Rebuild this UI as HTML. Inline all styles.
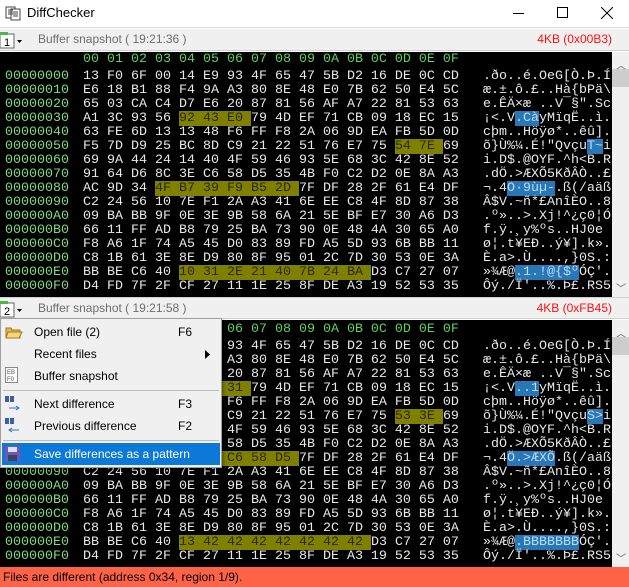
<!DOCTYPE html>
<html><head><meta charset="utf-8">
<style>
*{margin:0;padding:0;box-sizing:border-box}
body{width:629px;height:587px;overflow:hidden;background:#fff;font-family:"Liberation Sans",sans-serif;position:relative}
.abs{position:absolute}
.title{left:0;top:0;width:629px;height:28px;background:#fff;border-bottom:1px solid #d8d8d8}
.tb{left:0;width:629px;height:22px;background:#f0f0f0;border-bottom:1px solid #d0d0d0}
.tb .t{position:absolute;left:38px;top:3px;font-size:12px;color:#6d6d6d}
.tb .r{position:absolute;right:17px;top:3px;font-size:12px;color:#ff1010}
.pane{left:0;width:612px;background:#000}
.sb{left:612px;width:17px;background:#f0f0f0}
pre{position:absolute;font-family:"Liberation Mono",monospace;font-size:13.33px;line-height:14px;color:#e8e8e8;white-space:pre}
.g{color:#5fd35f}
.o{color:#7fdc7f}
.h{background:#808000;color:#2a2a00}
.b{background:#2878b8;color:#bcdcf4}
.menu{left:0;top:318px;width:222px;height:150px;background:#f0f0f0;border:1px solid #a0a0a0;box-shadow:2px 2px 3px rgba(0,0,0,.3)}
.mi{position:absolute;left:33px;font-size:12px;color:#000}
.sc{position:absolute;left:177px;font-size:12px;color:#000}
.sep{position:absolute;left:2px;width:216px;height:1px;background:#bdbdbd}
.status{left:0;top:567px;width:629px;height:20px;background:#fe6347;font-size:12px;color:#000;padding:3px 0 0 3px}
</style></head><body>
<div class="abs title">
 <svg class="abs" style="left:5px;top:5px" width="16" height="16"><rect x="1" y="2" width="9" height="11" fill="#fff" stroke="#444"/><rect x="6" y="4" width="9" height="11" fill="#fff" stroke="#444"/><path d="M3 5h5M3 7h5M3 9h5M8 7h5M8 9h5M8 11h5" stroke="#444"/></svg>
 <div class="abs" style="left:27px;top:5px;font-size:13px;color:#000">DiffChecker</div>
 <div class="abs" style="left:513px;top:13px;width:11px;height:1px;background:#000"></div>
 <div class="abs" style="left:557px;top:7px;width:11px;height:11px;border:1px solid #000"></div>
 <svg class="abs" style="left:601px;top:7px" width="12" height="12"><path d="M0 0L12 12M12 0L0 12" stroke="#000"/></svg>
</div>

<div class="abs tb" style="top:29px">
 <svg class="abs" style="left:0;top:2px" width="24" height="18"><rect x="0" y="3" width="14" height="14" fill="#fff" stroke="#666"/><rect x="0" y="1" width="8" height="3" fill="#4cb848"/><text x="4" y="15" font-size="11" font-family="Liberation Sans">1</text><path d="M17 9h5l-2.5 3z" fill="#000"/></svg>
 <div class="t">Buffer snapshot ( 19:21:36 )</div>
 <div class="r">4KB (0x00B3)</div>
</div>

<div class="abs pane" style="top:52px;height:245px"></div>
<div class="abs sb" style="top:52px;height:245px"><div class="abs" style="left:4px;top:5px;font-size:10px;color:#555">︿</div><div class="abs" style="left:0;top:17px;width:17px;height:18px;background:#cdcdcd"></div><div class="abs" style="left:4px;top:228px;font-size:10px;color:#555">﹀</div></div>
<pre class="g" style="left:83px;top:53px">00 01 02 03 04 05 06 07 08 09 0A 0B 0C 0D 0E 0F</pre>
<pre class="o" style="left:5px;top:70px">00000000
00000010
00000020
00000030
00000040
00000050
00000060
00000070
00000080
00000090
000000A0
000000B0
000000C0
000000D0
000000E0
000000F0</pre>
<pre style="left:83px;top:70px">13 F0 6F 00 14 E9 93 4F 65 47 5B D2 16 DE 0C CD
E6 18 B1 88 F4 9A A3 80 8E 48 E0 7B 62 50 E4 5C
65 03 CA C4 D7 E6 20 87 81 56 AF A7 22 81 53 63
A1 3C 93 56 <span class="h">92 43 E0 </span>79 4D EF 71 CB 09 18 EC 15
63 FE 6D 13 13 48 F6 FF F8 2A 06 9D EA FB 5D 0D
F5 7D D9 25 BC 8D C9 21 22 51 76 E7 75 <span class="h">54 7E </span>69
69 9A 44 24 14 40 4F 59 46 93 5E 68 3C 42 8E 52
91 64 D6 8C 3E C6 58 D5 35 4B F0 C2 D2 0E 8A A3
AC 9D 34 <span class="h">4F B7 39 F9 B5 2D </span>7F DF 28 2F 61 E4 DF
C2 24 56 10 7E F1 2A A3 41 6E EE C8 4F 8D 87 38
09 BA BB 9F 0E 3E 9B 58 6A 21 5E BF E7 30 A6 D3
66 11 FF AD B8 79 25 BA 73 90 0E 48 4A 30 65 A0
F8 A6 1F 74 A5 45 D0 83 89 FD A5 5D 93 6B BB 11
C8 1B 61 3E 8E D9 80 8F 95 01 2C 7D 30 53 0E 3A
BB BE C6 40 <span class="h">10 31 2E 21 40 7B 24 BA </span>D3 C7 27 07
D4 FD 7F 2F CF 27 11 1E 25 8F DE A3 19 52 53 35</pre>
<pre style="left:483px;top:70px">.ðo..é.OeG[Ò.Þ.Í
æ.±.ô.£..Hà{bPä\
e.ÊÄ×æ ..V¯§".Sc
¡&lt;.V<span class="b">.Cà</span>yMïqË..ì.
cþm..Höÿø*..êû].
õ}Ù%¼.É!"Qvçu<span class="b">T~</span>i
i.D$.@OYF.^h&lt;B.R
.dÖ.&gt;ÆXÕ5KðÂÒ..£
¬.4<span class="b">O·9ùµ-</span>.ß(/aäß
Â$V.~ñ*£AnîÈO..8
.º»..&gt;.Xj!^¿ç0¦Ó
f.ÿ.¸y%ºs..HJ0e 
ø¦.t¥EÐ..ý¥].k».
È.a&gt;.Ù....,}0S.:
»¾Æ@<span class="b">.1.!@{$º</span>ÓÇ'.
Ôý./Ï'..%.Þ£.RS5</pre>

<div class="abs tb" style="top:297px;border-top:1px solid #d0d0d0">
 <svg class="abs" style="left:0;top:2px" width="24" height="18"><rect x="0" y="3" width="14" height="14" fill="#fff" stroke="#666"/><rect x="0" y="1" width="8" height="3" fill="#4cb848"/><text x="4" y="15" font-size="11" font-family="Liberation Sans">2</text><path d="M17 9h5l-2.5 3z" fill="#000"/></svg>
 <div class="t">Buffer snapshot ( 19:21:58 )</div>
 <div class="r">4KB (0xFB45)</div>
</div>

<div class="abs pane" style="top:320px;height:247px"></div>
<div class="abs sb" style="top:320px;height:247px"><div class="abs" style="left:4px;top:5px;font-size:10px;color:#555">︿</div><div class="abs" style="left:0;top:17px;width:17px;height:18px;background:#cdcdcd"></div><div class="abs" style="left:4px;top:230px;font-size:10px;color:#555">﹀</div></div>
<pre class="g" style="left:83px;top:323px">00 01 02 03 04 05 06 07 08 09 0A 0B 0C 0D 0E 0F</pre>
<pre class="o" style="left:5px;top:340px">00000000
00000010
00000020
00000030
00000040
00000050
00000060
00000070
00000080
00000090
000000A0
000000B0
000000C0
000000D0
000000E0
000000F0</pre>
<pre style="left:83px;top:340px">13 F0 6F 00 14 E9 93 4F 65 47 5B D2 16 DE 0C CD
E6 18 B1 88 F4 9A A3 80 8E 48 E0 7B 62 50 E4 5C
65 03 CA C4 D7 E6 20 87 81 56 AF A7 22 81 53 63
A1 3C 93 56 <span class="h">8F 81 31 </span>79 4D EF 71 CB 09 18 EC 15
63 FE 6D 13 13 48 F6 FF F8 2A 06 9D EA FB 5D 0D
F5 7D D9 25 BC 8D C9 21 22 51 76 E7 75 <span class="h">53 3E </span>69
69 9A 44 24 14 40 4F 59 46 93 5E 68 3C 42 8E 52
91 64 D6 8C 3E C6 58 D5 35 4B F0 C2 D2 0E 8A A3
AC 9D 34 <span class="h">D6 8C 3E C6 58 D5 </span>7F DF 28 2F 61 E4 DF
C2 24 56 10 7E F1 2A A3 41 6E EE C8 4F 8D 87 38
09 BA BB 9F 0E 3E 9B 58 6A 21 5E BF E7 30 A6 D3
66 11 FF AD B8 79 25 BA 73 90 0E 48 4A 30 65 A0
F8 A6 1F 74 A5 45 D0 83 89 FD A5 5D 93 6B BB 11
C8 1B 61 3E 8E D9 80 8F 95 01 2C 7D 30 53 0E 3A
BB BE C6 40 <span class="h">13 42 42 42 42 42 42 42 </span>D3 C7 27 07
D4 FD 7F 2F CF 27 11 1E 25 8F DE A3 19 52 53 35</pre>
<pre style="left:483px;top:340px">.ðo..é.OeG[Ò.Þ.Í
æ.±.ô.£..Hà{bPä\
e.ÊÄ×æ ..V¯§".Sc
¡&lt;.V<span class="b">..1</span>yMïqË..ì.
cþm..Höÿø*..êû].
õ}Ù%¼.É!"Qvçu<span class="b">S&gt;</span>i
i.D$.@OYF.^h&lt;B.R
.dÖ.&gt;ÆXÕ5KðÂÒ..£
¬.4<span class="b">Ö.&gt;ÆXÕ</span>.ß(/aäß
Â$V.~ñ*£AnîÈO..8
.º»..&gt;.Xj!^¿ç0¦Ó
f.ÿ.¸y%ºs..HJ0e 
ø¦.t¥EÐ..ý¥].k».
È.a&gt;.Ù....,}0S.:
»¾Æ@<span class="b">.BBBBBBB</span>ÓÇ'.
Ôý./Ï'..%.Þ£.RS5</pre>

<div class="abs menu">
 <svg class="abs" style="left:4px;top:5px" width="18" height="16"><path d="M1 4h5l1 2h8v8H1z" fill="#e8b840" stroke="#a07820"/><path d="M3 8h14l-3 6H1z" fill="#f6d77a" stroke="#a07820"/></svg>
 <div class="mi" style="top:6px">Open file (2)</div><div class="sc" style="top:6px">F6</div>
 <div class="mi" style="top:28px">Recent files</div>
 <svg class="abs" style="left:204px;top:31px" width="6" height="9"><path d="M0 0l5 4.5L0 9z" fill="#000"/></svg>
 <svg class="abs" style="left:4px;top:48px" width="14" height="17"><rect x="0.5" y="0.5" width="12" height="15" fill="#fff" stroke="#888"/><text x="2" y="7" font-size="6" fill="#555" font-family="Liberation Sans">EB</text><text x="2" y="14" font-size="6" fill="#555" font-family="Liberation Sans">F0</text></svg>
 <div class="mi" style="top:50px">Buffer snapshot</div>
 <div class="sep" style="top:71px"></div>
 <svg class="abs" style="left:4px;top:76px" width="16" height="16"><rect x="0" y="1" width="4" height="6" fill="#3a5fa8"/><rect x="5" y="1" width="4" height="6" fill="#3a5fa8"/><path d="M4 13h10M11 11l3 2-3 2" stroke="#3a70c8" fill="none"/></svg>
 <div class="mi" style="top:78px">Next difference</div><div class="sc" style="top:78px">F3</div>
 <svg class="abs" style="left:4px;top:98px" width="16" height="16"><rect x="0" y="1" width="4" height="6" fill="#3a5fa8"/><rect x="5" y="1" width="4" height="6" fill="#3a5fa8"/><path d="M4 13h10M7 11l-3 2 3 2" stroke="#3a70c8" fill="none"/></svg>
 <div class="mi" style="top:100px">Previous difference</div><div class="sc" style="top:100px">F2</div>
 <div class="sep" style="top:121px"></div>
 <div class="abs" style="left:1px;top:124px;width:218px;height:22px;background:#0c78d8"></div>
 <svg class="abs" style="left:4px;top:127px" width="16" height="16"><rect x="0" y="0" width="15" height="15" fill="#6a5ab0"/><rect x="3" y="1" width="9" height="5" fill="#e0e0f0"/><rect x="3" y="9" width="9" height="6" fill="#404060"/></svg>
 <div class="mi" style="top:128px;color:#fff">Save differences as a pattern</div>
</div>

<div class="abs status">Files are different (address 0x34, region 1/9).</div>
</body></html>
